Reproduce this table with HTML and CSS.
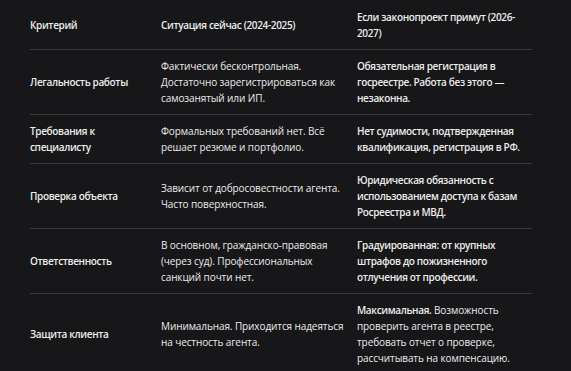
FILE: index.html
```html
<!DOCTYPE html>
<html lang="ru">
<head>
<meta charset="utf-8">
<link rel="stylesheet" href="styles.css">
</head>
<body>
<div class="wrap">
<table class="cmp">
<colgroup><col class="c1"><col class="c2"><col class="c3"></colgroup>
<thead>
<tr><th>Критерий</th><th>Ситуация сейчас (2024-2025)</th><th>Если законопроект примут (2026-<wbr>2027)</th></tr>
</thead>
<tbody>
<tr><td class="k">Легальность работы</td><td>Фактически бесконтрольная. Достаточно зарегистрироваться как самозанятый или ИП.</td><td class="b">Обязательная регистрация в госреестре. Работа без этого — незаконна.</td></tr>
<tr><td class="k">Требования к специалисту</td><td>Формальных требований нет. Всё решает резюме и портфолио.</td><td class="b">Нет судимости, подтвержденная квалификация, регистрация в РФ.</td></tr>
<tr><td class="k">Проверка объекта</td><td>Зависит от добросовестности агента. Часто поверхностная.</td><td class="b">Юридическая обязанность с использованием доступа к базам Росреестра и МВД.</td></tr>
<tr><td class="k">Ответственность</td><td>В основном, гражданско-правовая (через суд). Профессиональных санкций почти нет.</td><td class="b">Градуированная: от крупных штрафов до пожизненного отлучения от профессии.</td></tr>
<tr><td class="k">Защита клиента</td><td>Минимальная. Приходится надеяться на честность агента.</td><td><strong>Максимальная.</strong> Возможность проверить агента в реестре, требовать отчет о проверке, рассчитывать на компенсацию.</td></tr>
</tbody>
</table>
</div>
</body>
</html>
```
FILE: styles.css
```css
html, body {
  margin: 0;
  padding: 0;
  background: #171719;
}
body {
  font-family: "Open Sans", "Noto Sans", sans-serif;
  font-size: 10px;
  line-height: 16px;
  color: #ececec;
}
.wrap {
  padding: 1px 0 0 30px;
}
.cmp {
  width: 502px;
  border-collapse: collapse;
  table-layout: fixed;
}
.c1 { width: 131px; }
.c2 { width: 196px; }
.c3 { width: 175px; }
.cmp th, .cmp td {
  padding: 8px 12px 8px 0;
  text-align: left;
  vertical-align: middle;
  border-bottom: 1px solid #3a3a3c;
  letter-spacing: -0.1px;
}
.cmp th:last-child, .cmp td:last-child {
  padding-right: 6px;
}
.cmp th {
  font-weight: 600;
  letter-spacing: -0.35px;
}
.cmp tbody tr:last-child td {
  border-bottom: none;
}
.cmp td {
  font-weight: 400;
}
.cmp td.k, .cmp td.b {
  font-weight: 600;
  letter-spacing: -0.35px;
}
.cmp strong {
  font-weight: 600;
  letter-spacing: -0.35px;
}
```
